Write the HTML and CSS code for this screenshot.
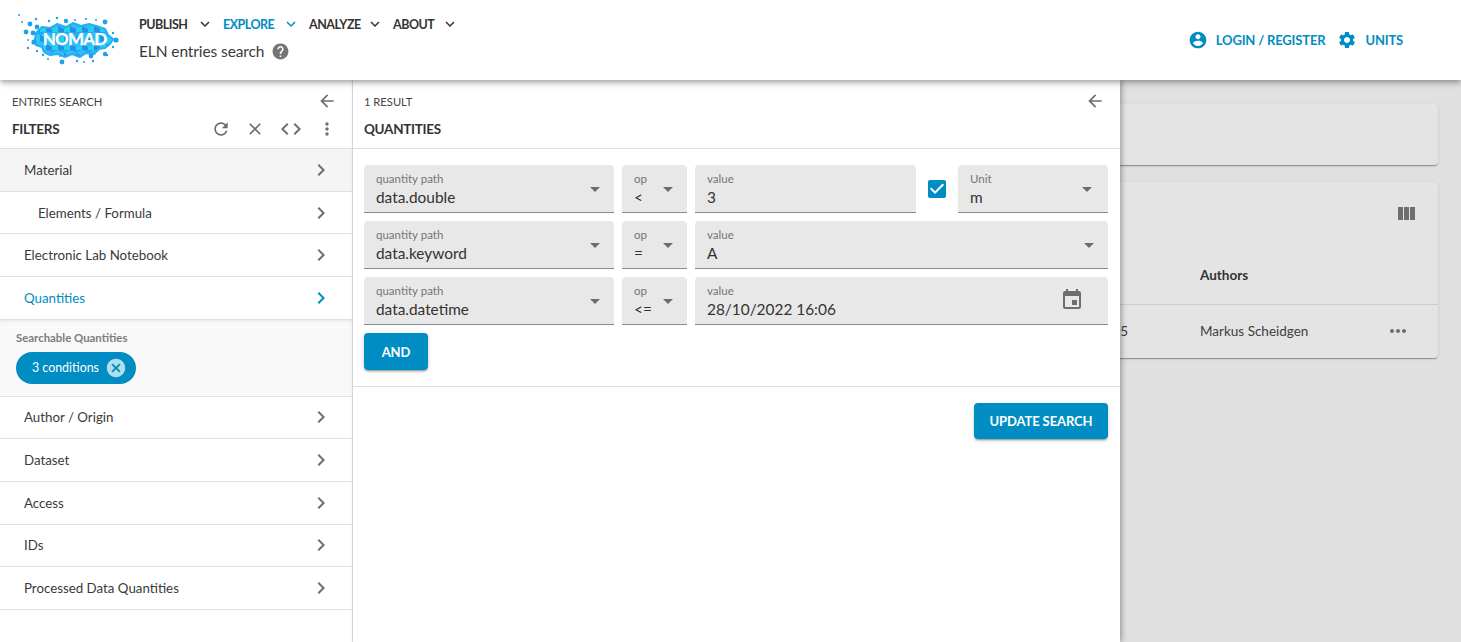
FILE: index.html
```html
<!DOCTYPE html>
<html lang="en">
<head>
<meta charset="utf-8">
<title>ELN entries search</title>
<link rel="stylesheet" href="styles.css">
</head>
<body>
<svg class="defs" aria-hidden="true">
  <defs>
    <symbol id="i-down" viewBox="0 0 24 24"><path d="M16.59 8.59L12 13.17 7.41 8.59 6 10l6 6 6-6z"/></symbol>
    <symbol id="i-next" viewBox="0 0 24 24"><path d="M10 6L8.59 7.41 13.17 12l-4.58 4.59L10 18l6-6z"/></symbol>
    <symbol id="i-back" viewBox="0 0 24 24"><path d="M20 11H7.83l5.59-5.59L12 4l-8 8 8 8 1.41-1.41L7.83 13H20v-2z"/></symbol>
    <symbol id="i-reset" viewBox="0 0 24 24"><path d="M17.65 6.35C16.2 4.9 14.21 4 12 4c-4.42 0-7.99 3.58-7.99 8s3.57 8 7.99 8c3.73 0 6.84-2.55 7.73-6h-2.08c-.82 2.33-3.04 4-5.65 4-3.31 0-6-2.69-6-6s2.69-6 6-6c1.66 0 3.14.69 4.22 1.78L13 11h7V4l-2.35 2.35z"/></symbol>
    <symbol id="i-clear" viewBox="0 0 24 24"><path d="M19 6.41L17.59 5 12 10.59 6.41 5 5 6.41 10.59 12 5 17.59 6.41 19 12 13.41 17.59 19 19 17.59 13.41 12z"/></symbol>
    <symbol id="i-code" viewBox="0 0 24 24"><path d="M9.4 16.6L4.8 12l4.6-4.6L8 6l-6 6 6 6 1.4-1.4zm5.2 0l4.6-4.6-4.6-4.6L16 6l6 6-6 6-1.4-1.4z"/></symbol>
    <symbol id="i-vert" viewBox="0 0 24 24"><path d="M12 8c1.1 0 2-.9 2-2s-.9-2-2-2-2 .9-2 2 .9 2 2 2zm0 2c-1.1 0-2 .9-2 2s.9 2 2 2 2-.9 2-2-.9-2-2-2zm0 6c-1.1 0-2 .9-2 2s.9 2 2 2 2-.9 2-2-.9-2-2-2z"/></symbol>
    <symbol id="i-horiz" viewBox="0 0 24 24"><path d="M6 10c-1.1 0-2 .9-2 2s.9 2 2 2 2-.9 2-2-.9-2-2-2zm12 0c-1.1 0-2 .9-2 2s.9 2 2 2 2-.9 2-2-.9-2-2-2zm-6 0c-1.1 0-2 .9-2 2s.9 2 2 2 2-.9 2-2-.9-2-2-2z"/></symbol>
    <symbol id="i-help" viewBox="0 0 24 24"><path d="M12 2C6.48 2 2 6.48 2 12s4.48 10 10 10 10-4.48 10-10S17.52 2 12 2zm1 17h-2v-2h2v2zm2.07-7.75l-.9.92C13.45 12.9 13 13.5 13 15h-2v-.5c0-1.1.45-2.1 1.17-2.83l1.24-1.26c.37-.36.59-.86.59-1.41 0-1.1-.9-2-2-2s-2 .9-2 2H8c0-2.21 1.79-4 4-4s4 1.79 4 4c0 .88-.36 1.68-.93 2.25z"/></symbol>
    <symbol id="i-user" viewBox="0 0 24 24"><path d="M12 2C6.48 2 2 6.48 2 12s4.48 10 10 10 10-4.48 10-10S17.52 2 12 2zm0 3c1.66 0 3 1.34 3 3s-1.34 3-3 3-3-1.34-3-3 1.34-3 3-3zm0 14.2c-2.5 0-4.71-1.28-6-3.22.03-1.99 4-3.08 6-3.08 1.99 0 5.97 1.09 6 3.08-1.29 1.94-3.5 3.22-6 3.22z"/></symbol>
    <symbol id="i-gear" viewBox="0 0 24 24"><path d="M19.14 12.94c.04-.3.06-.61.06-.94 0-.32-.02-.64-.07-.94l2.03-1.58a.49.49 0 0 0 .12-.61l-1.92-3.32a.488.488 0 0 0-.59-.22l-2.39.96c-.5-.38-1.03-.7-1.62-.94l-.36-2.54a.484.484 0 0 0-.48-.41h-3.84c-.24 0-.43.17-.47.41l-.36 2.54c-.59.24-1.13.57-1.62.94l-2.39-.96c-.22-.08-.47 0-.59.22L2.74 8.87c-.12.21-.08.47.12.61l2.03 1.58c-.05.3-.09.63-.09.94s.02.64.07.94l-2.03 1.58a.49.49 0 0 0-.12.61l1.92 3.32c.12.22.37.29.59.22l2.39-.96c.5.38 1.03.7 1.62.94l.36 2.54c.05.24.24.41.48.41h3.84c.24 0 .44-.17.47-.41l.36-2.54c.59-.24 1.13-.56 1.62-.94l2.39.96c.22.08.47 0 .59-.22l1.92-3.32c.12-.22.07-.47-.12-.61l-2.01-1.58zM12 15.6c-1.98 0-3.6-1.62-3.6-3.6s1.62-3.6 3.6-3.6 3.6 1.62 3.6 3.6-1.62 3.6-3.6 3.6z"/></symbol>
    <symbol id="i-cols" viewBox="0 0 24 24"><path d="M10 18h5V5h-5v13zm-6 0h5V5H4v13zM16 5v13h5V5h-5z"/></symbol>
    <symbol id="i-event" viewBox="0 0 24 24"><path d="M17 12h-5v5h5v-5zM16 1v2H8V1H6v2H5c-1.11 0-1.99.9-1.99 2L3 19c0 1.1.89 2 2 2h14c1.1 0 2-.9 2-2V5c0-1.1-.9-2-2-2h-1V1h-2zm3 18H5V8h14v11z"/></symbol>
    <symbol id="i-drop" viewBox="0 0 24 24"><path d="M7 10l5 5 5-5z"/></symbol>
    <symbol id="i-cancel" viewBox="0 0 24 24"><path d="M12 2C6.47 2 2 6.47 2 12s4.47 10 10 10 10-4.47 10-10S17.53 2 12 2zm5 13.59L15.59 17 12 13.41 8.41 17 7 15.59 10.59 12 7 8.41 8.41 7 12 10.59 15.59 7 17 8.41 13.41 12 17 15.59z"/></symbol>
    <symbol id="i-check" viewBox="0 0 24 24"><path d="M19 3H5c-1.11 0-2 .9-2 2v14c0 1.1.89 2 2 2h14c1.11 0 2-.9 2-2V5c0-1.1-.89-2-2-2zm-9 14l-5-5 1.41-1.41L10 14.17l7.59-7.59L19 8l-9 9z"/></symbol>
    <pattern id="cubes" width="12" height="18" patternUnits="userSpaceOnUse" patternTransform="translate(1 2)">
      <rect width="12" height="18" fill="#22a8f4"/>
      <path d="M0 3L6 0 12 3 6 6z" fill="#35bdf9"/>
      <path d="M0 3L6 6V12L0 9z" fill="#2490ee"/>
      <path d="M12 3L6 6V12L12 9z" fill="#22d4ea"/>
      <path d="M-6 12L0 9 6 12 0 15z" fill="#35bdf9"/>
      <path d="M6 12L12 9 18 12 12 15z" fill="#35bdf9"/>
      <path d="M0 15L6 12V18L0 21z" fill="#22d4ea"/>
      <path d="M12 15L6 12V18L12 21z" fill="#2490ee"/>
    </pattern>
  </defs>
</svg>

<header class="topbar">
  <svg class="logo" viewBox="0 0 110 54" role="img" aria-label="NOMAD logo">
    <path class="logo-blob" d="M21 21l6-6 8 1 7-4 9 3 7-4 8 3 8-2 7 2 9 3 3 6 5 4-3 5-5 4-6 1-5 5-8-1-6 4-8-3-7 3-7-3-8 1-6-3-2-5-6-2-1-6z"/>
    <g class="logo-dots">
      <circle cx="4" cy="3" r="1"/><circle cx="7" cy="10" r="1"/><circle cx="15" cy="12" r="2.4"/><circle cx="21" cy="7" r="1.2"/><circle cx="22" cy="15" r="2.4"/><circle cx="34" cy="9" r="1.2"/><circle cx="42" cy="6" r="1.2"/><circle cx="51" cy="9" r="2.2"/><circle cx="60" cy="8" r="1"/><circle cx="71" cy="7" r="1.1"/><circle cx="81" cy="8" r="1"/><circle cx="90" cy="10" r="2.4"/><circle cx="11" cy="20" r="2.4"/><circle cx="18" cy="21" r="2.4"/><circle cx="13" cy="28" r="1"/><circle cx="19" cy="30" r="2.6"/><circle cx="13" cy="36" r="1.2"/><circle cx="22" cy="39" r="1.2"/><circle cx="28" cy="43" r="1.2"/><circle cx="33" cy="47" r="1"/><circle cx="45" cy="44" r="1"/><circle cx="47" cy="50" r="2.4"/><circle cx="62" cy="49" r="1.2"/><circle cx="69" cy="50" r="1"/><circle cx="78" cy="49" r="1.2"/><circle cx="76" cy="44" r="2.4"/><circle cx="92" cy="43" r="1.2"/><circle cx="98" cy="35" r="1.2"/><circle cx="101" cy="28" r="2.6"/><circle cx="98" cy="21" r="1.2"/><circle cx="90" cy="42" r="2.2"/>
    </g>
    <text class="logo-text" x="59.5" y="33" text-anchor="middle">NOMAD</text>
  </svg>
  <div class="nav-block">
    <nav class="nav">
      <span class="nav-item">PUBLISH<svg class="nav-caret"><use href="#i-down"/></svg></span>
      <span class="nav-item is-active">EXPLORE<svg class="nav-caret"><use href="#i-down"/></svg></span>
      <span class="nav-item">ANALYZE<svg class="nav-caret"><use href="#i-down"/></svg></span>
      <span class="nav-item">ABOUT<svg class="nav-caret"><use href="#i-down"/></svg></span>
    </nav>
    <div class="page-title">ELN entries search<svg class="help-icon"><use href="#i-help"/></svg></div>
  </div>
  <div class="top-actions">
    <span class="top-action"><svg class="top-icon"><use href="#i-user"/></svg>LOGIN / REGISTER</span>
    <span class="top-action"><svg class="top-icon"><use href="#i-gear"/></svg>UNITS</span>
  </div>
</header>

<div class="workspace">
  <main class="results">
    <section class="card card-top"></section>
    <section class="card card-table">
      <div class="table-tools"><svg class="cols-icon"><use href="#i-cols"/></svg></div>
      <div class="table-row table-head"><span></span><span>Authors</span><span></span></div>
      <div class="table-row table-body"><span class="cell-date">28/10/2022 16:05</span><span>Markus Scheidgen</span><svg class="dots-icon"><use href="#i-horiz"/></svg></div>
    </section>
  </main>

  <div class="drawers">
    <aside class="drawer-filters">
      <div class="drawer-head">
        <div class="head-top"><span class="overline">ENTRIES SEARCH</span><svg class="head-icon"><use href="#i-back"/></svg></div>
        <div class="head-bottom">
          <span class="head-title">FILTERS</span>
          <span class="head-tools">
            <svg class="tool-icon"><use href="#i-reset"/></svg>
            <svg class="tool-icon"><use href="#i-clear"/></svg>
            <svg class="tool-icon tool-wide"><use href="#i-code"/></svg>
            <svg class="tool-icon"><use href="#i-vert"/></svg>
          </span>
        </div>
      </div>
      <div class="filter-row is-hover">Material<svg class="row-icon"><use href="#i-next"/></svg></div>
      <div class="filter-row is-sub">Elements / Formula<svg class="row-icon"><use href="#i-next"/></svg></div>
      <div class="filter-row">Electronic Lab Notebook<svg class="row-icon"><use href="#i-next"/></svg></div>
      <div class="filter-row is-selected">Quantities<svg class="row-icon"><use href="#i-next"/></svg></div>
      <div class="filter-summary">
        <div class="summary-label">Searchable Quantities</div>
        <span class="chip">3 conditions<svg class="chip-icon"><use href="#i-cancel"/></svg></span>
      </div>
      <div class="filter-row">Author / Origin<svg class="row-icon"><use href="#i-next"/></svg></div>
      <div class="filter-row">Dataset<svg class="row-icon"><use href="#i-next"/></svg></div>
      <div class="filter-row">Access<svg class="row-icon"><use href="#i-next"/></svg></div>
      <div class="filter-row">IDs<svg class="row-icon"><use href="#i-next"/></svg></div>
      <div class="filter-row">Processed Data Quantities<svg class="row-icon"><use href="#i-next"/></svg></div>
    </aside>

    <aside class="drawer-quantities">
      <div class="drawer-head">
        <div class="head-top"><span class="overline">1 RESULT</span><svg class="head-icon"><use href="#i-back"/></svg></div>
        <div class="head-bottom"><span class="head-title">QUANTITIES</span></div>
      </div>
      <div class="query">
        <div class="query-row">
          <div class="field f-path"><label class="field-label">quantity path</label><span class="field-value">data.double</span><svg class="drop"><use href="#i-drop"/></svg></div>
          <div class="field f-op"><label class="field-label">op</label><span class="field-value">&lt;</span><svg class="drop"><use href="#i-drop"/></svg></div>
          <div class="field f-grow"><label class="field-label">value</label><span class="field-value">3</span></div>
          <svg class="check"><use href="#i-check"/></svg>
          <div class="field f-unit"><label class="field-label">Unit</label><span class="field-value">m</span><svg class="drop drop-unit"><use href="#i-drop"/></svg></div>
        </div>
        <div class="query-row">
          <div class="field f-path"><label class="field-label">quantity path</label><span class="field-value">data.keyword</span><svg class="drop"><use href="#i-drop"/></svg></div>
          <div class="field f-op"><label class="field-label">op</label><span class="field-value">=</span><svg class="drop"><use href="#i-drop"/></svg></div>
          <div class="field f-grow"><label class="field-label">value</label><span class="field-value">A</span><svg class="drop"><use href="#i-drop"/></svg></div>
        </div>
        <div class="query-row">
          <div class="field f-path"><label class="field-label">quantity path</label><span class="field-value">data.datetime</span><svg class="drop"><use href="#i-drop"/></svg></div>
          <div class="field f-op"><label class="field-label">op</label><span class="field-value">&lt;=</span><svg class="drop"><use href="#i-drop"/></svg></div>
          <div class="field f-grow"><label class="field-label">value</label><span class="field-value">28/10/2022 16:06</span><svg class="cal"><use href="#i-event"/></svg></div>
        </div>
        <button class="btn btn-and" type="button">AND</button>
      </div>
      <div class="update-bar"><button class="btn btn-update" type="button">UPDATE SEARCH</button></div>
    </aside>
  </div>
</div>
</body>
</html>
```

FILE: styles.css
```css
:root {
  --blue: #008dc3;
  --ink: #2f2f2f;
  --muted: #757575;
  --icon: #6e6e6e;
  --line: #e0e0e0;
  --field: #e8e8e8;
}

* { box-sizing: border-box; }

html, body { height: 100%; }

body {
  margin: 0;
  display: flex;
  flex-direction: column;
  overflow: hidden;
  font-family: Lato, "Liberation Sans", sans-serif;
  font-size: 14px;
  color: var(--ink);
  background: #e0e0e0;
}

svg { fill: currentColor; flex: none; }

.defs { position: absolute; width: 0; height: 0; }

/* Top bar */
.topbar {
  position: relative;
  z-index: 3;
  flex: none;
  height: 80px;
  display: flex;
  background: #fff;
  box-shadow: 0 2px 4px -1px rgba(0,0,0,.2), 0 4px 5px rgba(0,0,0,.14), 0 1px 10px rgba(0,0,0,.12);
}

.logo { width: 110px; height: 54px; margin: 12px 0 0 15px; }
.logo-blob { fill: url(#cubes); stroke: #28aef2; stroke-width: 2; stroke-linejoin: round; }
.logo-dots { fill: #1f9fee; }
.logo-text { font-family: Lato, sans-serif; font-size: 17px; font-weight: 700; letter-spacing: -.8px; fill: #fff; stroke: #fff; stroke-width: .25px; }

.nav-block { margin-left: 14px; padding-top: 12px; }
.nav { display: grid; grid-template-columns: 84px 86px 84px 75px; height: 24px; align-items: center; }
.nav-item {
  display: flex;
  align-items: center;
  justify-content: space-between;
  font-size: 12.5px;
  font-weight: 700;
  letter-spacing: -.5px;
  color: #333;
  white-space: nowrap;
}
.nav-item.is-active { color: var(--blue); }
.nav-caret { width: 18px; height: 18px; margin-right: 9px; color: #333; }
.is-active .nav-caret { color: var(--blue); }

.page-title {
  display: flex;
  align-items: center;
  height: 24px;
  margin-top: 3px;
  font-size: 15.5px;
  letter-spacing: -.1px;
  color: #3a3a3a;
}
.help-icon { width: 19px; height: 19px; margin-left: 7px; color: #757575; }

.top-actions {
  margin-left: auto;
  margin-right: 58px;
  display: flex;
  align-items: center;
  gap: 12px;
  height: 80px;
}
.top-action {
  display: flex;
  align-items: center;
  gap: 8px;
  font-size: 13px;
  font-weight: 700;
  letter-spacing: -.17px;
  color: var(--blue);
}
.top-icon { width: 20px; height: 20px; }

/* Workspace */
.workspace { position: relative; flex: 1; min-height: 0; }

.results { padding: 24px 23px 0 24px; }

.card {
  background: #e4e4e4;
  border-radius: 4px;
  box-shadow: 0 2px 1px -1px rgba(0,0,0,.2), 0 1px 1px rgba(0,0,0,.14), 0 1px 3px rgba(0,0,0,.12);
}
.card-top { height: 61px; margin-bottom: 17px; }
.card-table { height: 176px; }

.table-tools { height: 78px; display: flex; justify-content: flex-end; padding: 20px 20px 0 0; }
.cols-icon { width: 24px; height: 24px; color: var(--icon); }

.table-row { display: grid; grid-template-columns: 1104px 1fr 24px; column-gap: 72px; align-items: center; padding-right: 28px; }
.table-row > :nth-child(2) { margin-right: -72px; }
.table-head { height: 45px; padding-bottom: 14px; border-bottom: 1px solid #cdcdcd; font-weight: 700; font-size: 13.5px; color: #333; }
.table-body { height: 53px; padding-bottom: 2px; font-size: 13.5px; color: #404040; }
.cell-date { text-align: right; }
.dots-icon { width: 24px; height: 24px; color: var(--icon); }

/* Drawers */
.drawers { position: absolute; inset: 0 auto 0 0; display: flex; z-index: 2; }

.drawer-filters { width: 353px; background: #fff; border-right: 1px solid var(--line); }

.drawer-quantities {
  width: 767px;
  background: #fff;
  box-shadow: 2px 0 5px rgba(0,0,0,.3);
}

.drawer-head { height: 69px; padding: 9px 11px 0; border-bottom: 1px solid var(--line); }
.drawer-filters .drawer-head { padding-left: 12px; }
.head-top, .head-bottom { display: flex; align-items: center; justify-content: space-between; }
.head-top { height: 24px; }
.head-bottom { height: 28px; margin-top: 2px; }
.overline { font-size: 11.2px; color: #444; }
.head-title { padding-bottom: 1px; font-size: 13.5px; font-weight: 700; letter-spacing: -.3px; color: #333; }
.head-tools { display: flex; align-items: center; gap: 14px; margin-right: 4px; }
.head-icon { width: 20px; height: 20px; color: var(--icon); margin-right: 4px; }
.tool-icon { width: 20px; height: 20px; color: var(--icon); }
.tool-wide { width: 24px; height: 24px; }

.filter-row {
  height: 42.67px;
  display: flex;
  align-items: center;
  justify-content: space-between;
  padding: 0 19px 0 24px;
  border-bottom: 1px solid var(--line);
  font-size: 13.3px;
  color: #3a3a3a;
}
.filter-row.is-hover { background: #f5f5f5; }
.filter-row.is-sub { padding-left: 38px; padding-top: 1px; }
.filter-row.is-selected { color: var(--blue); }
.row-icon { width: 24px; height: 24px; color: var(--icon); }
.is-selected .row-icon { color: var(--blue); }

.filter-summary {
  height: 77px;
  padding: 11px 16px 0;
  background: #f9f9f9;
  border-bottom: 1px solid var(--line);
  box-shadow: inset 0 3px 4px -3px rgba(0,0,0,.12);
}
.summary-label { font-size: 11.4px; font-weight: 700; color: #7d7d7d; margin-bottom: 7px; line-height: 14px; }
.chip {
  display: inline-flex;
  align-items: center;
  justify-content: space-between;
  width: 120px;
  height: 32px;
  padding: 0 9px 0 16px;
  border-radius: 16px;
  background: var(--blue);
  color: #fff;
  font-size: 12.4px;
}
.chip-icon { width: 22px; height: 22px; color: #fff; opacity: .7; }

/* Query form */
.query { padding: 16px 12px 16px 11px; border-bottom: 1px solid var(--line); display: flex; flex-direction: column; gap: 8px; align-items: flex-start; }
.query-row { display: flex; gap: 8px; align-items: center; width: 744px; }

.field {
  position: relative;
  height: 48px;
  padding: 7px 12px 0;
  background: var(--field);
  border-bottom: 1px solid #8a8a8a;
  border-radius: 4px 4px 0 0;
}
.f-path { width: 250px; }
.f-op { width: 65px; }
.f-grow { flex: 1; }
.f-unit { width: 150px; }

.field-label { display: block; font-size: 11.5px; line-height: 14px; color: var(--muted); }
.field-value { display: block; font-size: 15.4px; line-height: 20px; margin-top: 1px; color: #333; }

.drop { position: absolute; right: 7px; top: 12px; width: 24px; height: 24px; color: var(--icon); }
.drop-unit { right: 9px; }
.cal { position: absolute; right: 24px; top: 11px; width: 24px; height: 24px; color: var(--icon); }

.check { width: 24px; height: 24px; margin: 0 1px 0 1px; color: var(--blue); }

.btn {
  border: 0;
  border-radius: 4px;
  background: var(--blue);
  color: #fff;
  font-family: inherit;
  font-size: 13px;
  font-weight: 700;
  letter-spacing: -.1px;
  box-shadow: 0 3px 1px -2px rgba(0,0,0,.2), 0 2px 2px rgba(0,0,0,.14), 0 1px 5px rgba(0,0,0,.12);
}
.btn-and { width: 64px; height: 37px; }
.btn-update { width: 134px; height: 36px; }

.update-bar { display: flex; justify-content: flex-end; padding: 16px 12px; }
```
